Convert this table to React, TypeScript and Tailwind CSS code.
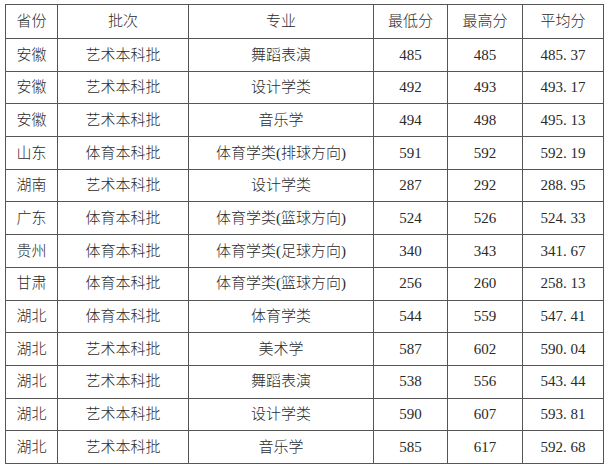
import React from "react";

const rows: [string, string, string, string, string, string][] = [
  ["安徽", "艺术本科批", "舞蹈表演", "485", "485", "485.37"],
  ["安徽", "艺术本科批", "设计学类", "492", "493", "493.17"],
  ["安徽", "艺术本科批", "音乐学", "494", "498", "495.13"],
  ["山东", "体育本科批", "体育学类(排球方向)", "591", "592", "592.19"],
  ["湖南", "艺术本科批", "设计学类", "287", "292", "288.95"],
  ["广东", "体育本科批", "体育学类(篮球方向)", "524", "526", "524.33"],
  ["贵州", "体育本科批", "体育学类(足球方向)", "340", "343", "341.67"],
  ["甘肃", "体育本科批", "体育学类(篮球方向)", "256", "260", "258.13"],
  ["湖北", "体育本科批", "体育学类", "544", "559", "547.41"],
  ["湖北", "艺术本科批", "美术学", "587", "602", "590.04"],
  ["湖北", "艺术本科批", "舞蹈表演", "538", "556", "543.44"],
  ["湖北", "艺术本科批", "设计学类", "590", "607", "593.81"],
  ["湖北", "艺术本科批", "音乐学", "585", "617", "592.68"],
];

function Avg({ v }: { v: string }) {
  const [a, b] = v.split(".");
  return (
    <span>
      {a}
      <span className="inline-block w-[7.5px] text-left">.</span>
      {b}
    </span>
  );
}

const cell = "border-[1.5px] border-[#555] text-center align-middle p-0";

export default function App() {
  return (
    <div
      className="w-[608px] h-[471px] bg-white pt-[4px] pl-[5px] text-[15px] text-[#2a2a2a]"
      style={{ fontFamily: "'Liberation Serif', 'Noto Sans CJK SC', serif" }}
    >
      <table className="border-collapse table-fixed w-[598px]">
        <colgroup>
          <col className="w-[52px]" />
          <col className="w-[131px]" />
          <col className="w-[185px]" />
          <col className="w-[74px]" />
          <col className="w-[75px]" />
          <col className="w-[81px]" />
        </colgroup>
        <thead>
          <tr className="h-[34px]">
            <th className={`${cell} font-light`}>省份</th>
            <th className={`${cell} font-light`}>批次</th>
            <th className={`${cell} font-light`}>专业</th>
            <th className={`${cell} font-light`}>最低分</th>
            <th className={`${cell} font-light`}>最高分</th>
            <th className={`${cell} font-light`}>平均分</th>
          </tr>
        </thead>
        <tbody className="font-light">
          {rows.map((r, i) => (
            <tr key={i} className="h-[32.7px]">
              <td className={cell}>{r[0]}</td>
              <td className={cell}>{r[1]}</td>
              <td className={cell}>{r[2]}</td>
              <td className={cell}>{r[3]}</td>
              <td className={cell}>{r[4]}</td>
              <td className={cell}>
                <Avg v={r[5]} />
              </td>
            </tr>
          ))}
        </tbody>
      </table>
    </div>
  );
}
